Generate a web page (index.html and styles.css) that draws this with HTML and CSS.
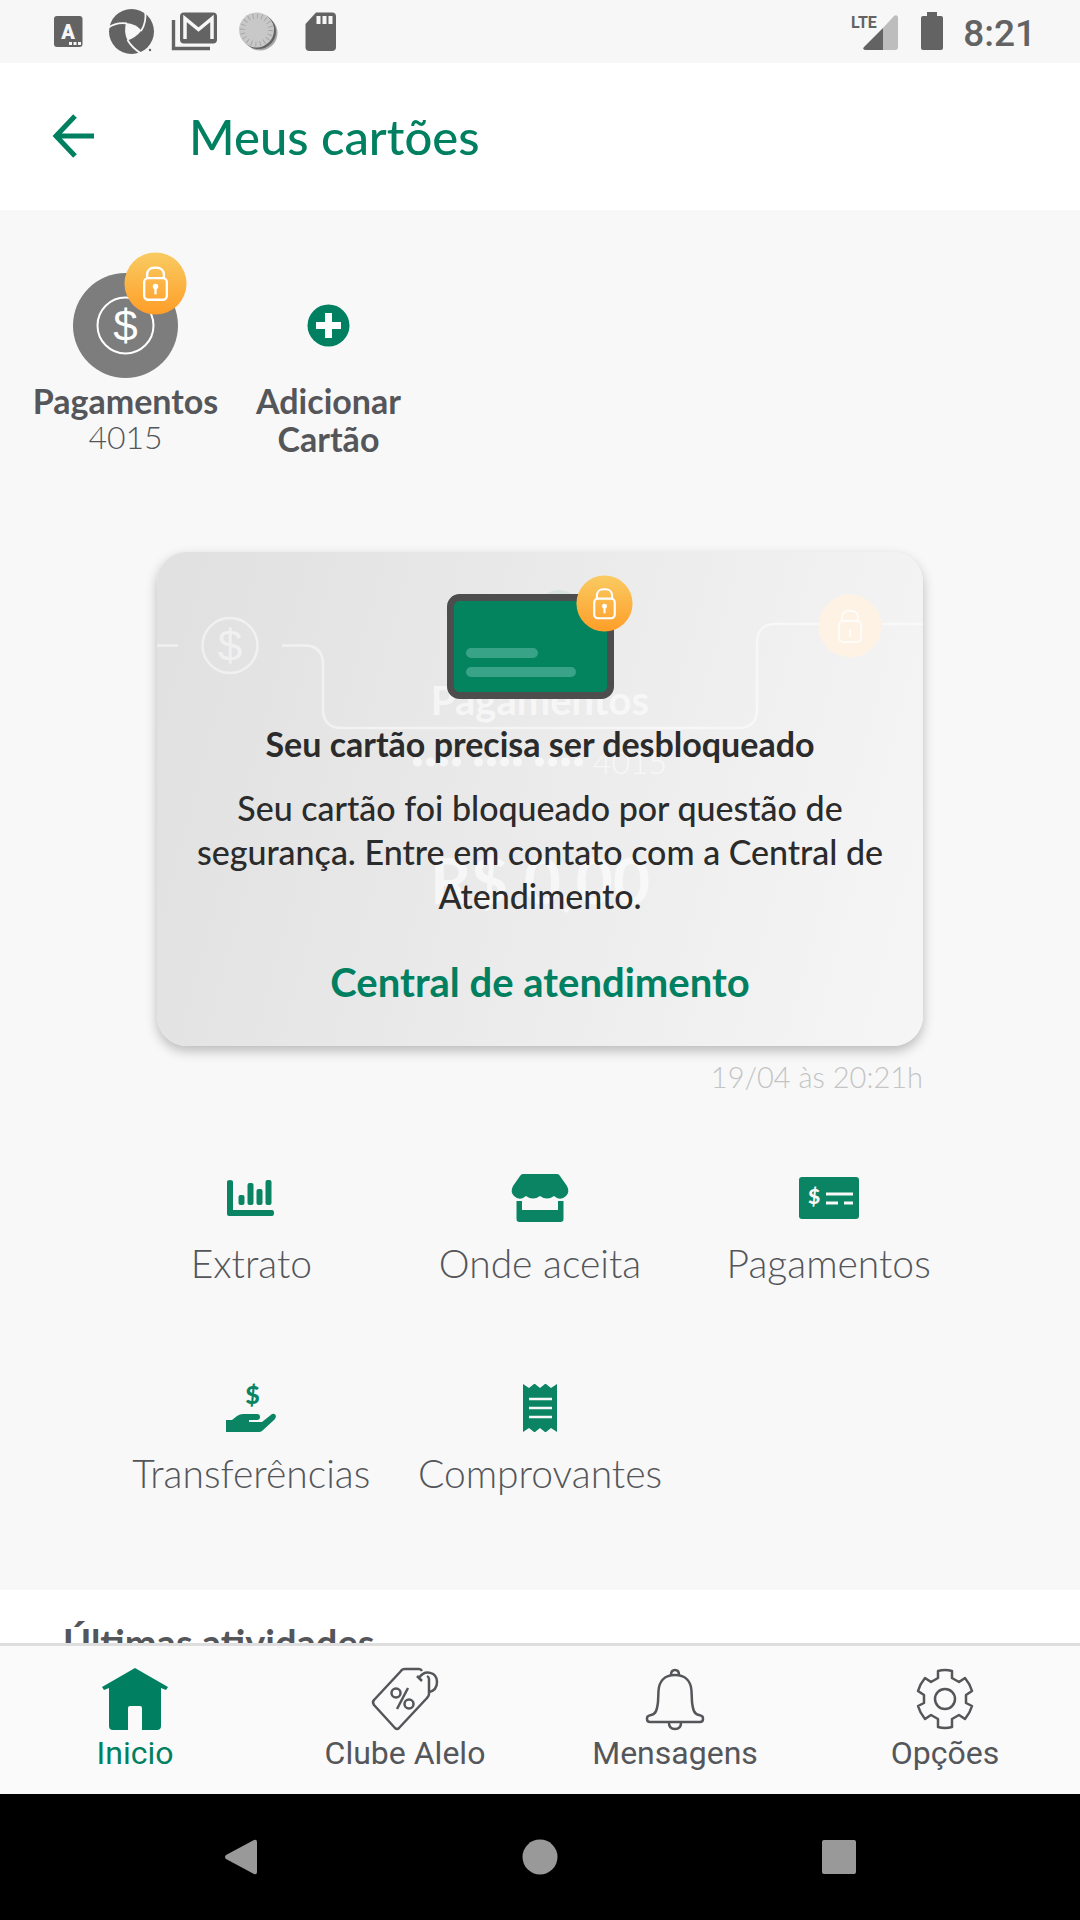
FILE: index.html
```html
<!DOCTYPE html>
<html lang="pt-BR">
<head>
<meta charset="utf-8">
<meta name="viewport" content="width=device-width, initial-scale=1">
<title>Meus cartões</title>
<link rel="stylesheet" href="styles.css">
</head>
<body>
<svg class="defs" aria-hidden="true">
  <defs>
    <linearGradient id="amber" x1="0" y1="0" x2="0" y2="1">
      <stop offset="0" stop-color="#f9cb62"/>
      <stop offset="1" stop-color="#ff9e28"/>
    </linearGradient>
    <symbol id="lock" viewBox="0 0 64 64">
      <circle cx="32" cy="32" r="31.5" fill="url(#amber)"/>
      <g fill="none" stroke="#fff" stroke-width="2.4">
        <rect x="20.500" y="26.500" width="23" height="22" rx="4"/>
        <path d="M23.500 26.500v-4.500a7 7 0 0 1 7-6h3a7 7 0 0 1 7 6v4.500"/>
        <path d="M32 35v8"/>
      </g>
      <circle cx="32" cy="35" r="2.800" fill="#fff"/>
    </symbol>
  </defs>
</svg>

<header class="status">
  <div class="status-icons">
    <svg viewBox="0 0 63 63"><rect x="17" y="16" width="28.500" height="31" rx="3"/><text x="31" y="39" class="badge-a">A</text><g fill="#f7f7f7"><rect x="32" y="42" width="3" height="3"/><rect x="36.500" y="42" width="3" height="3"/><rect x="41" y="42" width="3" height="3"/></g></svg>
    <svg viewBox="0 0 63 63"><circle cx="31.500" cy="31.500" r="22.500"/><circle cx="50" cy="50" r="1.200"/><g fill="none" stroke="#f7f7f7" stroke-width="1.800"><path d="M8 28Q16 22 27 23.500"/><path d="M45 10Q47 22 41 31"/><path d="M27.500 40Q32 48 42 54"/></g><path fill="#f7f7f7" d="M26 23Q36 23.500 41.500 30.500 36 37.500 27.500 40.500 23.500 32 26 23Z"/></svg>
    <svg viewBox="0 0 63 63"><path fill="none" stroke="#636363" stroke-width="3.400" d="M10.500 20v28.500H47"/><rect x="17" y="12.500" width="37" height="31" rx="4"/><path fill="none" stroke="#f7f7f7" stroke-width="3.500" d="M22 39V18.500l13.500 11 13.500-11V39"/></svg>
    <svg viewBox="0 0 63 63"><circle cx="34" cy="33" r="17.500" fill="#aaa"/><circle cx="32.500" cy="31.500" r="17.500"/><circle cx="30.500" cy="30" r="17.500" fill="#c8c8c8"/><circle cx="30.500" cy="30" r="14" fill="none" stroke="#a8a8a8" stroke-width="5" stroke-dasharray="1 3.400"/></svg>
    <svg viewBox="0 0 63 63"><path d="M27 12.500h16q4 0 4 4V47q0 4-4 4H20.500q-4 0-4-4V24Z"/><path stroke="#f7f7f7" stroke-width="4" d="M29.500 16v8M35.500 16v8M41.500 16v8"/></svg>
  </div>
  <div class="status-right">
    <svg class="signal" viewBox="0 0 48 63"><path fill="#bdbdbd" d="M32 28 43 16q3-2 4 1v30q0 3-3 3H32Z"/><path d="M32 28V50H14q-3-1-1-3Z"/><text x="0" y="28" class="lte">LTE</text></svg>
    <svg class="battery" viewBox="0 0 22 63"><path d="M6 12h10v4h4q2 0 2 2v30q0 2-2 2H2q-2 0-2-2V18q0-2 2-2h4Z"/></svg>
    <time>8:21</time>
  </div>
</header>

<div class="topbar">
  <button class="back" aria-label="Voltar"><svg viewBox="0 0 44 44"><path d="M42 22H5M23 2 4 22l19 20"/></svg></button>
  <h1>Meus cartões</h1>
</div>

<main>
  <nav class="cards" aria-label="Cartões">
    <button class="card-pick">
      <span class="pick-art">
        <svg class="coin" viewBox="0 0 105 105"><circle cx="52.500" cy="52.500" r="52.500" fill="#7d7d7d"/><circle cx="52.500" cy="52.500" r="28" fill="none" stroke="#fff" stroke-width="2"/><text x="52.500" y="68" class="dollar">$</text></svg>
        <svg class="pick-lock"><use href="#lock"/></svg>
      </span>
      <strong>Pagamentos</strong>
      <span class="digits">4015</span>
    </button>
    <button class="card-pick">
      <span class="pick-art">
        <svg class="coin" viewBox="0 0 105 105"><circle cx="52.500" cy="52.500" r="21" fill="#008060"/><path d="M52.500 40v25M40 52.500h25" stroke="#fff" stroke-width="7"/></svg>
      </span>
      <strong>Adicionar<br>Cartão</strong>
    </button>
  </nav>

  <section class="card-area">
    <article class="card">
      <div class="card-back" aria-hidden="true">
        <svg class="circuit" viewBox="0 0 766 494" preserveAspectRatio="xMidYMid slice">
          <circle cx="402" cy="59" r="21" fill="#008060" opacity=".07"/>
          <g fill="none" stroke="#fff" stroke-width="2.500" opacity=".5">
            <path d="M0 93.500h21M125 93.500h22q19 0 19 19V157q0 19 19 19h396q19 0 19-19V91q0-19 19-19H662M725 72h41"/>
            <circle cx="73" cy="93.500" r="27.500"/>
          </g>
          <text x="73" y="109" class="dollar" opacity=".5">$</text>
          <circle cx="693" cy="74" r="31.500" fill="#fdf2e4"/>
          <g fill="none" stroke="#fff" stroke-width="2" opacity=".8"><rect x="682" y="69" width="22" height="21" rx="4"/><path d="M685 69v-4a6 6 0 0 1 6-6h4a6 6 0 0 1 6 6v4M693 77v8"/></g>
        </svg>
        <strong class="back-name">Pagamentos</strong>
        <span class="back-number">
          <svg viewBox="0 0 170 32"><g fill="#fff"><circle cx="4.500" cy="16" r="4.500"/><circle cx="17.500" cy="16" r="4.500"/><circle cx="30.500" cy="16" r="4.500"/><circle cx="43.500" cy="16" r="4.500"/><circle cx="65.500" cy="16" r="4.500"/><circle cx="78.500" cy="16" r="4.500"/><circle cx="91.500" cy="16" r="4.500"/><circle cx="104.500" cy="16" r="4.500"/><circle cx="126.500" cy="16" r="4.500"/><circle cx="139.500" cy="16" r="4.500"/><circle cx="152.500" cy="16" r="4.500"/><circle cx="165.500" cy="16" r="4.500"/></g></svg>
          4015
        </span>
        <strong class="back-balance">R$ 0,00</strong>
      </div>
      <div class="card-front">
        <svg class="card-art" viewBox="0 0 188 126"><rect x="4.500" y="23.500" width="160" height="98" rx="9" fill="#04835f" stroke="#4d4d4d" stroke-width="7"/><path d="M25 79h62M25 98h100" stroke="#38a387" stroke-width="10" stroke-linecap="round"/><svg x="130" y="1" width="57" height="57"><use href="#lock"/></svg></svg>
        <h2>Seu cartão precisa ser desbloqueado</h2>
        <p>Seu cartão foi bloqueado por questão de segurança. Entre em contato com a Central de Atendimento.</p>
        <a href="#central">Central de atendimento</a>
      </div>
    </article>
    <p class="updated">19/04 às 20:21h</p>
  </section>

  <nav class="actions" aria-label="Serviços">
    <a href="#extrato"><svg viewBox="0 0 60 48"><path d="M9 6q3 0 3 2v28h39q2 0 2 3t-2 3H8q-2 0-2-2V8q0-2 3-2Z"/><rect x="17.500" y="21" width="6" height="10" rx="2"/><rect x="26.500" y="9" width="6" height="22" rx="2"/><rect x="35.500" y="15" width="6" height="16" rx="2"/><rect x="44.500" y="6" width="6" height="25" rx="2"/></svg>Extrato</a>
    <a href="#onde"><svg viewBox="0 0 60 48"><path d="M13 0h34q2 0 3 2l7 10q3 6-1 10-4 4-9 2l-3-2q-7 5-14 0-7 5-14 0l-3 2q-5 2-9-2-4-4-1-10L10 2q1-2 3-2Z"/><path d="M6.500 27H12v9h36v-9h5.500v18q0 3-3 3h-41q-3 0-3-3Z"/></svg>Onde aceita</a>
    <a href="#pagamentos"><svg viewBox="0 0 60 48"><rect y="3" width="60" height="42" rx="3"/><path d="M27 20h27M27 29h12M45 29h9" stroke="#f8f8f8" stroke-width="3"/><text x="15" y="30" class="tiny-dollar" fill="#f8f8f8">$</text></svg>Pagamentos</a>
    <a href="#transferencias"><svg viewBox="0 0 60 48"><text x="31.500" y="20" class="tiny-dollar large">$</text><path d="M5 36h6l5-4q3-2 6-2h14q3 0 3 3t-3 3h-8v2h13l10-8q3-1 4 2 0 2-2 4L41 47q-1 1-3 1H5Z"/></svg>Transferências</a>
    <a href="#comprovantes"><svg viewBox="0 0 60 48"><path d="m13 0 6 4 5-4h1l5 4 5-4h1l5 4 6-4v48l-6-4-5 4h-1l-5-4-5 4h-1l-5-4-6 4Z"/><path d="M19 15h23M19 24h23M19 33h23" stroke="#f8f8f8" stroke-width="2.700"/></svg>Comprovantes</a>
  </nav>

  <section class="activity">
    <h2>Últimas atividades</h2>
  </section>
</main>

<nav class="tabs" aria-label="Principal">
  <a class="active" href="#inicio"><svg viewBox="0 0 66 62"><path d="M33 1 66 20l-2 3-5-2v38q0 4-4 4H40V41q0-2-2-2H28q-2 0-2 2v22H11q-4 0-4-4V21l-5 2-2-3Z"/></svg>Inicio</a>
  <a href="#clube"><svg viewBox="0 0 66 62"><g class="line"><path d="M50 4q-1-2-3-2H33q-3 0-4 2L2 33q-2 2 0 5l21 23q2 2 4 0l28-30q2-2 2-4V12q0-2-2-3"/><path d="m45 9 5 5M47 11c6-9 18-6 18 4 0 6-3 9-8 10"/><circle cx="24" cy="26" r="4.500"/><circle cx="37" cy="37" r="4.500"/><path d="M36 21 25 42"/></g></svg>Clube Alelo</a>
  <a href="#mensagens"><svg viewBox="0 0 66 62"><g class="line"><path d="M29 8q0-5 4-5t4 5"/><path d="M33 8c11 0 16 7 16.500 16L50 35c1 8 2 12 7 13 4 1 4 2 4 4q0 3-3 3H8q-3 0-3-3c0-2 0-3 4-4 5-1 6-5 7-13l.500-11C17 15 22 8 33 8Z"/><path d="M27 56q0 6 6 6t6-6"/></g></svg>Mensagens</a>
  <a href="#opcoes"><svg viewBox="0 0 66 62"><g class="line"><path d="M26 4q7-2 14 0v7l7 4 6-4q5 6 7 13l-6 4v8l6 3q-2 7-7 13l-6-4-7 4v8q-7 2-14 0v-8l-7-4-6 4q-5-6-7-13l6-3v-8l-6-4q2-7 7-13l6 4 7-4Z"/><circle cx="33" cy="32" r="10"/></g></svg>Opções</a>
</nav>

<footer class="sysnav">
  <button aria-label="Voltar"><svg viewBox="0 0 36 36"><path d="M31 1q3-1 3 2v30q0 3-3 2L3 20q-2-2 0-4Z"/></svg></button>
  <button aria-label="Início"><svg viewBox="0 0 36 36"><circle cx="18" cy="18" r="17.500"/></svg></button>
  <button aria-label="Recentes"><svg viewBox="0 0 36 36"><rect x="1" y="1" width="34" height="34" rx="2"/></svg></button>
</footer>
</body>
</html>
```

FILE: styles.css
```css
* { box-sizing: border-box; }

body {
  margin: 0;
  height: 100vh;
  display: flex;
  flex-direction: column;
  background: #f8f8f8;
  color: #54565a;
  font-family: Lato, "Open Sans", sans-serif;
  font-size: 34px;
}

h1, h2, p { margin: 0; }
a { color: inherit; text-decoration: none; }
button { border: 0; padding: 0; background: none; color: inherit; font: inherit; }
svg { display: block; overflow: visible; }
.defs { position: absolute; width: 0; height: 0; }

.status {
  flex: none;
  height: 63px;
  display: flex;
  justify-content: space-between;
  padding: 0 44px 0 37px;
  background: #f7f7f7;
  color: #636363;
  font-family: Roboto, sans-serif;
}
.status svg { height: 63px; fill: #636363; }
.status-icons { display: flex; }
.status-icons svg { width: 63px; }
.status-right { display: flex; align-items: center; }
.signal { width: 48px; }
.battery { width: 22px; margin: 0 20px 0 22px; }
.status time { font-size: 37px; font-weight: 500; line-height: 63px; padding-top: 4px; }
.badge-a { font: 900 20px Roboto, sans-serif; text-anchor: middle; fill: #f7f7f7; }
.lte { font: bold 16px "Liberation Sans Narrow", Roboto, sans-serif; }

.topbar {
  flex: none;
  height: 147px;
  display: flex;
  align-items: center;
  gap: 93px;
  padding: 0 52px 2px;
  background: #fff;
  color: #008060;
}
.back svg { width: 44px; height: 44px; fill: none; stroke: #008060; stroke-width: 5; }
.topbar h1 { font-size: 49px; font-weight: 500; line-height: 60px; }

main { flex: 1; min-height: 0; overflow: hidden; }

.cards { display: flex; padding: 63px 24px 0; height: 342px; }
.card-pick {
  width: 203px;
  display: flex;
  flex-direction: column;
  align-items: center;
  justify-content: flex-start;
  line-height: 38px;
}
.pick-art { position: relative; margin-bottom: 4px; }
.coin { width: 105px; height: 105px; }
.pick-lock { position: absolute; top: -21px; left: 51px; width: 63px; height: 63px; }
.digits { font-size: 32px; font-weight: 300; line-height: 34px; }
.dollar { font: 400 44px "Liberation Sans", sans-serif; fill: #fff; text-anchor: middle; }

.card-area { padding: 0 157px; }
.card {
  position: relative;
  border-radius: 30px;
  background: linear-gradient(105deg, #e1e1e1 5%, #ebebeb 50%, #f5f5f5 95%);
  box-shadow: 0 5px 12px rgba(0, 0, 0, .25);
}
.card-back {
  position: absolute;
  inset: 0;
  overflow: hidden;
  border-radius: 30px;
  display: flex;
  flex-direction: column;
  align-items: center;
  padding-top: 124px;
  color: rgba(255, 255, 255, .6);
}
.circuit { position: absolute; inset: 0; width: 100%; height: 100%; }
.back-name { font-size: 40px; line-height: 48px; }
.back-number { display: flex; align-items: center; gap: 10px; margin-top: 18px; font-size: 32px; font-weight: 300; line-height: 40px; }
.back-number svg { width: 170px; height: 32px; opacity: .6; }
.back-balance { font-size: 64px; line-height: 76px; margin-top: 60px; }
.card-front {
  position: relative;
  display: flex;
  flex-direction: column;
  align-items: center;
  padding: 22px 32px 40px;
  color: #2b2b2b;
  text-align: center;
}
.card-art { width: 188px; height: 126px; }
.card-front h2 { margin-top: 22px; font-size: 34px; line-height: 44px; }
.card-front p { margin-top: 20px; font-weight: 500; line-height: 44px; }
.card-front a { margin-top: 40px; color: #008060; font-size: 40px; font-weight: 700; line-height: 48px; }
.updated { margin-top: 12px; color: #c4c4c4; font-size: 29px; font-weight: 300; line-height: 38px; text-align: right; }

.actions {
  display: grid;
  grid-template-columns: repeat(3, 1fr);
  row-gap: 98px;
  padding: 78px 107px 94px;
  font-size: 39px;
  font-weight: 300;
}
.actions a { display: flex; flex-direction: column; align-items: center; gap: 18px; line-height: 46px; white-space: nowrap; color: #54565a; }
.actions svg { width: 60px; height: 48px; fill: #0a8463; }
.tiny-dollar { font: 900 21px Lato, sans-serif; text-anchor: middle; }
.tiny-dollar.large { font-size: 25px; }

.activity { background: #fff; padding: 28px 63px; }
.activity h2 { font-size: 38px; line-height: 48px; }

.tabs {
  flex: none;
  height: 151px;
  display: grid;
  grid-template-columns: repeat(4, 1fr);
  padding-top: 21px;
  border-top: 3px solid #dedede;
  background: #fafafa;
  font-family: Roboto, sans-serif;
  font-size: 32px;
}
.tabs a { display: flex; flex-direction: column; align-items: center; gap: 5px; line-height: 38px; }
.tabs svg { width: 66px; height: 62px; fill: #008060; }
.tabs .active { color: #008060; }
.line { fill: none; stroke: #54565a; stroke-width: 2.5; stroke-linejoin: round; }

.sysnav {
  flex: none;
  height: 126px;
  display: flex;
  justify-content: space-between;
  align-items: center;
  padding: 0 223px;
  background: #000;
}
.sysnav svg { width: 36px; height: 36px; fill: #999; }
```
